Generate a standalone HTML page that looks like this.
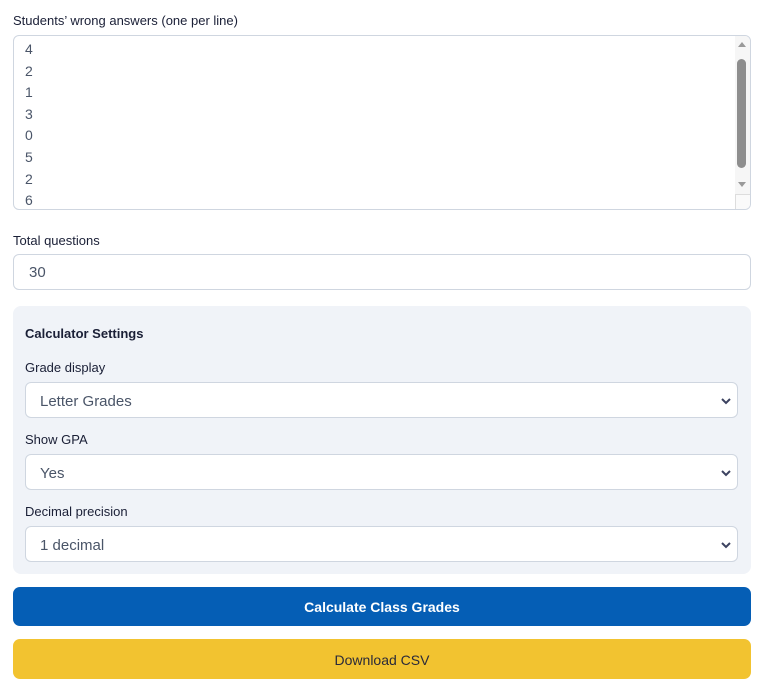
<!DOCTYPE html>
<html><head><style>
*{box-sizing:border-box;margin:0;padding:0}
body{width:764px;height:693px;background:#fff;font-family:"Liberation Sans",sans-serif;position:relative;overflow:hidden;color:#1a1a2e}
.a{position:absolute}
.lbl{font-size:13px;color:#1a1f36;white-space:nowrap}
.box{position:absolute;background:#fff;border:1px solid #cfd6e0;border-radius:6px}
.val{position:absolute;font-size:15px;color:#4a5568}
.chev{position:absolute;right:6px;top:14px}
</style></head><body>
<div class="a lbl" style="left:13px;top:13px">Students’ wrong answers (one per line)</div>
<div class="box" style="left:13px;top:35px;width:738px;height:175px;overflow:hidden">
 <div class="a" style="left:11px;top:3px;font-size:14px;line-height:21.6px;color:#4a5568">4<br>2<br>1<br>3<br>0<br>5<br>2<br>6</div>
 <div class="a" style="right:0;top:0;width:15px;height:158px;background:#f6f6f6"></div>
 <div class="a" style="right:4px;top:23px;width:9px;height:109px;background:#8e8e8e;border-radius:5px"></div>
 <div class="a" style="right:4px;top:6px;width:0;height:0;border-left:4px solid transparent;border-right:4px solid transparent;border-bottom:5px solid #999"></div>
 <div class="a" style="right:4px;top:146px;width:0;height:0;border-left:4px solid transparent;border-right:4px solid transparent;border-top:5px solid #999"></div>
 <div class="a" style="right:0;top:158px;width:15px;height:16px;background:#fafafa;border-left:1px solid #ddd;border-top:1px solid #ddd"></div>
</div>
<div class="a lbl" style="left:13px;top:233px">Total questions</div>
<div class="box" style="left:13px;top:254px;width:738px;height:36px"><div class="val" style="left:15px;top:9px">30</div></div>
<div class="a" style="left:13px;top:306px;width:738px;height:268px;background:#f0f3f8;border-radius:8px"></div>
<div class="a lbl" style="left:25px;top:326px;font-weight:bold">Calculator Settings</div>
<div class="a lbl" style="left:25px;top:360px">Grade display</div>
<div class="box" style="left:25px;top:382px;width:713px;height:36px"><div class="val" style="left:14px;top:10px">Letter Grades</div><svg class="chev" width="10" height="8" viewBox="0 0 10 8"><path d="M1 2l4 4 4-4" stroke="#3c4260" stroke-width="2" fill="none"/></svg></div>
<div class="a lbl" style="left:25px;top:432px">Show GPA</div>
<div class="box" style="left:25px;top:454px;width:713px;height:36px"><div class="val" style="left:14px;top:10px">Yes</div><svg class="chev" width="10" height="8" viewBox="0 0 10 8"><path d="M1 2l4 4 4-4" stroke="#3c4260" stroke-width="2" fill="none"/></svg></div>
<div class="a lbl" style="left:25px;top:504px">Decimal precision</div>
<div class="box" style="left:25px;top:526px;width:713px;height:36px"><div class="val" style="left:14px;top:10px">1 decimal</div><svg class="chev" width="10" height="8" viewBox="0 0 10 8"><path d="M1 2l4 4 4-4" stroke="#3c4260" stroke-width="2" fill="none"/></svg></div>
<div class="a" style="left:13px;top:587px;width:738px;height:39px;background:#055eb5;border-radius:7px;color:#fff;font-weight:bold;font-size:14px;text-align:center;line-height:40px">Calculate Class Grades</div>
<div class="a" style="left:13px;top:639px;width:738px;height:40px;background:#f2c330;border-radius:7px;color:#2a2a3a;font-size:14px;text-align:center;line-height:42px">Download CSV</div>
</body></html>
